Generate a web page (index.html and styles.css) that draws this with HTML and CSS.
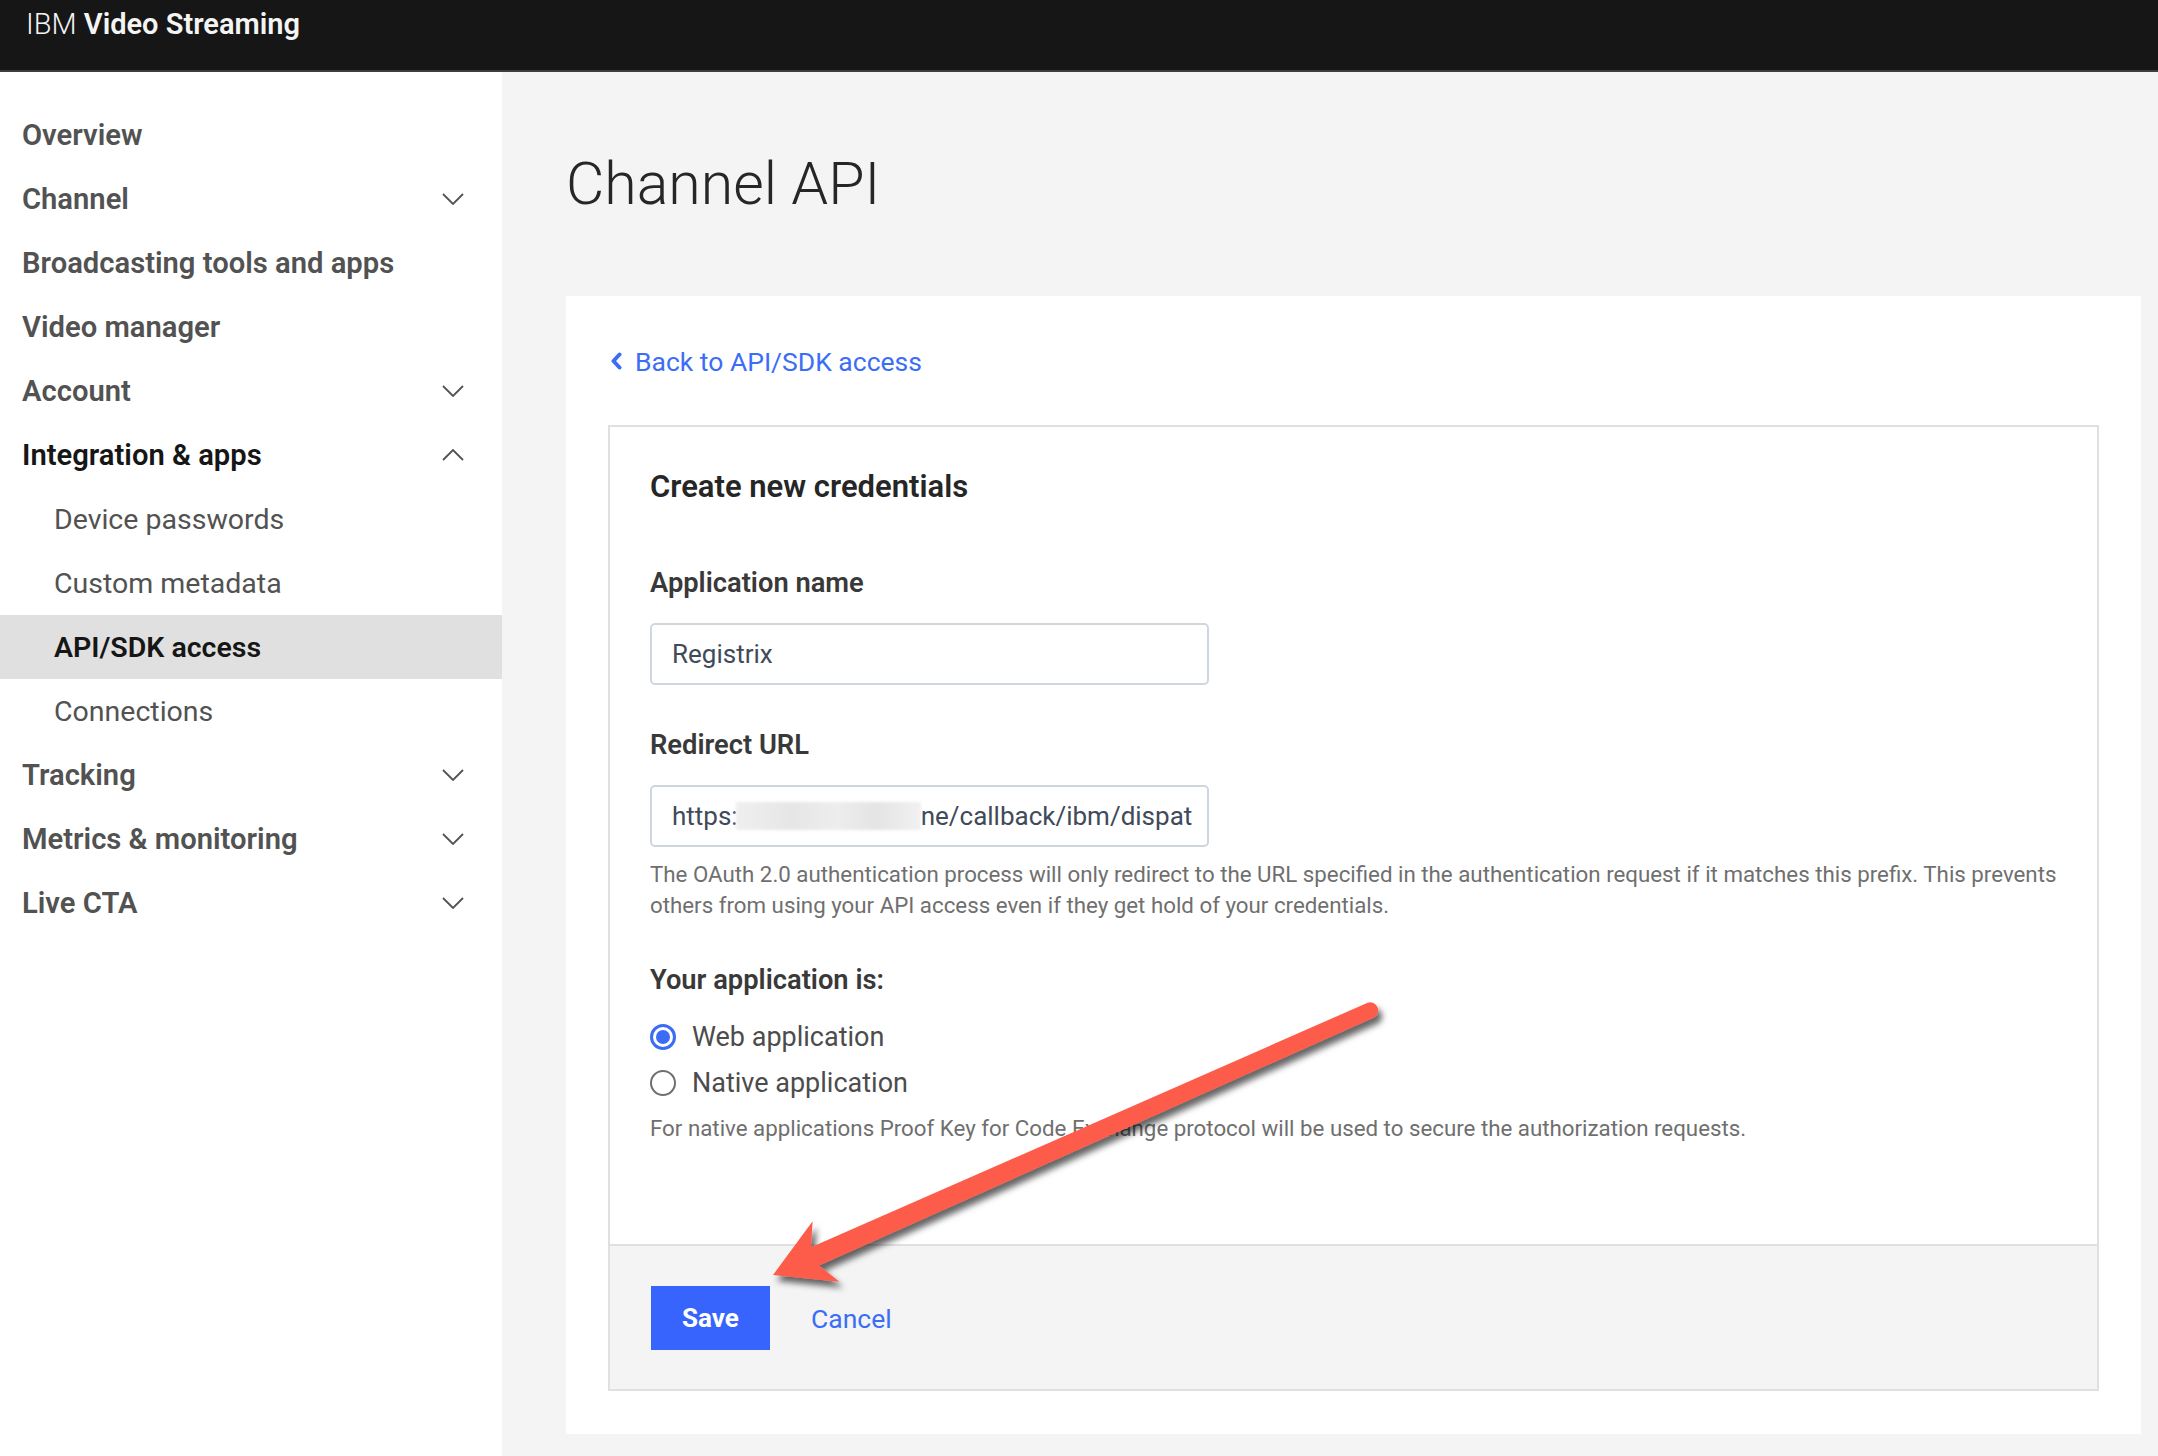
FILE: index.html
```html
<!DOCTYPE html>
<html lang="en">
<head>
<meta charset="utf-8">
<title>Channel API - IBM Video Streaming</title>
<link rel="stylesheet" href="styles.css">
</head>
<body>
<div class="page">
  <header class="topbar">
    <span class="brand"><span class="brand-ibm">IBM</span> <span class="brand-name">Video Streaming</span></span>
  </header>
  <div class="layout">
    <nav class="sidebar">
      <a class="nav-item">Overview</a>
      <a class="nav-item">Channel<svg class="chev" viewBox="0 0 22 12"><path d="M1 1 L11 11 L21 1"/></svg></a>
      <a class="nav-item">Broadcasting tools and apps</a>
      <a class="nav-item">Video manager</a>
      <a class="nav-item">Account<svg class="chev" viewBox="0 0 22 12"><path d="M1 1 L11 11 L21 1"/></svg></a>
      <a class="nav-item open">Integration &amp; apps<svg class="chev" viewBox="0 0 22 12"><path d="M1 11 L11 1 L21 11"/></svg></a>
      <a class="nav-sub">Device passwords</a>
      <a class="nav-sub">Custom metadata</a>
      <a class="nav-sub active">API/SDK access</a>
      <a class="nav-sub">Connections</a>
      <a class="nav-item">Tracking<svg class="chev" viewBox="0 0 22 12"><path d="M1 1 L11 11 L21 1"/></svg></a>
      <a class="nav-item">Metrics &amp; monitoring<svg class="chev" viewBox="0 0 22 12"><path d="M1 1 L11 11 L21 1"/></svg></a>
      <a class="nav-item">Live CTA<svg class="chev" viewBox="0 0 22 12"><path d="M1 1 L11 11 L21 1"/></svg></a>
    </nav>
    <main class="main">
      <h1 class="page-title">Channel API</h1>
      <section class="card">
        <a class="back-link"><svg class="back-chev" viewBox="0 0 12 18"><path d="M9.5 2.5 L3.5 9 L9.5 15.5"/></svg>Back to API/SDK access</a>
        <div class="panel">
          <div class="panel-body">
            <h2 class="panel-title">Create new credentials</h2>
            <div class="field-label first">Application name</div>
            <div class="text-input"><span class="input-value">Registrix</span></div>
            <div class="field-label">Redirect URL</div>
            <div class="text-input"><span class="input-value">https:<span class="blurred"></span>ne/callback/ibm/dispat</span></div>
            <p class="help">The OAuth 2.0 authentication process will only redirect to the URL specified in the authentication request if it matches this prefix. This prevents<br>others from using your API access even if they get hold of your credentials.</p>
            <div class="field-label group">Your application is:</div>
            <div class="radios">
              <label class="radio-row"><span class="radio checked"></span>Web application</label>
              <label class="radio-row"><span class="radio"></span>Native application</label>
            </div>
            <p class="help note">For native applications Proof Key for Code Exchange protocol will be used to secure the authorization requests.</p>
          </div>
          <div class="panel-footer">
            <button class="btn-primary">Save</button>
            <a class="btn-link">Cancel</a>
          </div>
        </div>
      </section>
    </main>
  </div>
  <svg class="annotation" width="2158" height="1456" viewBox="0 0 2158 1456">
    <defs>
      <filter id="shadow" x="-10%" y="-10%" width="130%" height="130%">
        <feDropShadow dx="4" dy="6" stdDeviation="3" flood-color="#000" flood-opacity="0.6"/>
      </filter>
    </defs>
    <path filter="url(#shadow)" fill="#fd5b4b" d="M773 1275 L812.6 1221.3 L811 1247.3 L1367.6 1002.8 A8 8 0 0 1 1374 1017.4 L819.1 1265.5 L839.4 1281.7 Z"/>
  </svg>
</div>
</body>
</html>
```

FILE: styles.css
```css
* { box-sizing: border-box; }

html, body {
  margin: 0;
  padding: 0;
}

body {
  font-family: Roboto, "Liberation Sans", sans-serif;
  background: #f4f4f4;
  color: #161616;
}

.page {
  position: relative;
  width: 2158px;
  min-height: 1456px;
}

.topbar {
  height: 72px;
  background: #161616;
  border-bottom: 2px solid #3d3d3d;
  padding: 4px 0 0 26px;
}

.brand {
  display: block;
  font-size: 29px;
  line-height: 40px;
  color: #f4f4f4;
}

.brand-ibm { font-weight: 300; }
.brand-name { font-weight: 600; }

.layout {
  display: flex;
  min-height: 1384px;
}

.sidebar {
  width: 502px;
  flex: none;
  background: #ffffff;
  padding-top: 31px;
  display: flex;
  flex-direction: column;
}

.nav-item,
.nav-sub {
  height: 64px;
  display: flex;
  align-items: center;
  justify-content: space-between;
  padding: 0 38px 0 22px;
  font-size: 28.5px;
  color: #525252;
  text-decoration: none;
}

.nav-item {
  font-size: 29.2px;
  font-weight: 600;
}

.nav-item.open {
  color: #161616;
}

.nav-sub {
  padding-left: 54px;
  font-weight: 400;
}

.nav-sub.active {
  background: #e0e0e0;
  color: #161616;
  font-weight: 600;
}

.chev {
  width: 22px;
  height: 12px;
  fill: none;
  stroke: #525252;
  stroke-width: 1.8;
}

.main {
  flex: 1;
  padding: 0 17px 22px 64px;
}

.page-title {
  margin: 76px 0 76px 0;
  font-size: 59px;
  line-height: 72px;
  font-weight: 300;
  color: #262626;
}

.card {
  background: #ffffff;
  padding: 47px 42px 43px 42px;
}

.back-link {
  display: flex;
  align-items: center;
  height: 36px;
  font-size: 26.5px;
  color: #3b6ef5;
  text-decoration: none;
}

.back-chev {
  width: 12px;
  height: 18px;
  margin: 0 13px 0 2px;
  fill: none;
  stroke: #3b6ef5;
  stroke-width: 4;
  stroke-linecap: round;
  stroke-linejoin: round;
}

.panel {
  margin-top: 46px;
  border: 2px solid #e0e0e0;
}

.panel-body {
  padding: 40px 40px 100px 40px;
}

.panel-title {
  margin: 0;
  font-size: 31px;
  line-height: 40px;
  font-weight: 600;
  color: #262626;
}

.field-label {
  margin-top: 42px;
  font-size: 27.3px;
  line-height: 36px;
  font-weight: 600;
  color: #393939;
}

.field-label.first { margin-top: 58px; }
.field-label.group { margin-top: 41px; }

.text-input {
  margin-top: 22px;
  width: 559px;
  height: 62px;
  border: 2px solid #cfd6de;
  border-radius: 5px;
  padding: 0 16px 0 20px;
  display: flex;
  align-items: center;
  font-size: 26px;
  color: #3f4a5a;
  background: #fff;
}

.input-value {
  flex: 1;
  display: flex;
  align-items: center;
  white-space: nowrap;
}

.blurred {
  display: inline-block;
  flex: none;
  width: 185px;
  height: 28px;
  margin-left: -2px;
  background: linear-gradient(90deg, #efefef 0%, #e6e6e6 30%, #ededed 55%, #e4e4e4 75%, #f1f1f1 100%);
  filter: blur(1.5px);
}

.help {
  margin: 12px 0 0 0;
  font-size: 22.3px;
  line-height: 31px;
  color: #6f6f6f;
  white-space: nowrap;
}

.help.note { margin-top: 7px; }

.radios {
  margin-top: 16px;
  display: flex;
  flex-direction: column;
}

.radio-row {
  height: 46px;
  display: flex;
  align-items: center;
  gap: 16px;
  font-size: 27px;
  color: #4c4c4c;
}

.radio {
  width: 26px;
  height: 26px;
  border-radius: 50%;
  border: 2px solid #6f6f6f;
  display: flex;
  align-items: center;
  justify-content: center;
  flex: none;
}

.radio.checked {
  border: 3px solid #3b6cf6;
}

.radio.checked::after {
  content: "";
  width: 14px;
  height: 14px;
  border-radius: 50%;
  background: #3b6cf6;
}

.panel-footer {
  border-top: 2px solid #e0e0e0;
  background: #f4f4f4;
  padding: 40px 40px 39px 41px;
  display: flex;
  align-items: center;
  gap: 41px;
}

.btn-primary {
  width: 119px;
  height: 64px;
  border: none;
  background: #3864fe;
  color: #ffffff;
  font-family: inherit;
  font-size: 26px;
  font-weight: 700;
  padding: 0;
}

.btn-link {
  font-size: 26.5px;
  color: #3b6ef5;
  text-decoration: none;
}

.annotation {
  position: absolute;
  left: 0;
  top: 0;
  pointer-events: none;
}
```
